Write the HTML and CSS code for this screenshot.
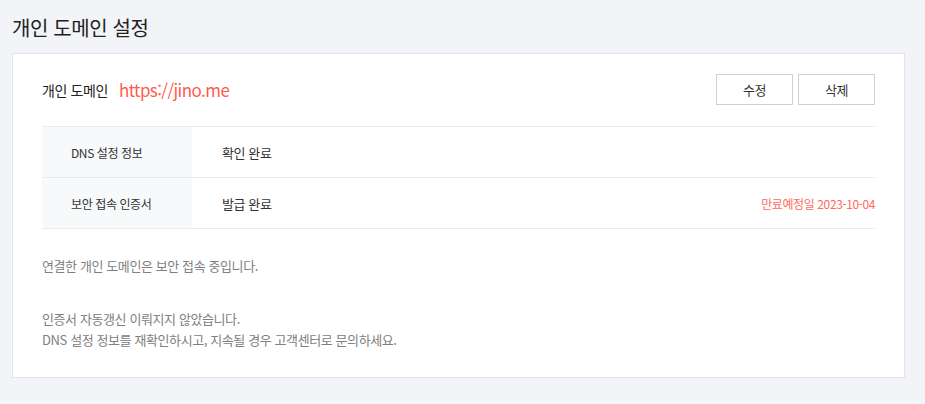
FILE: index.html
```html
<!DOCTYPE html>
<html lang="ko">
<head>
<meta charset="utf-8">
<link rel="stylesheet" href="styles.css">
</head>
<body>
<div class="page">
  <h1 class="title">개인 도메인 설정</h1>
  <div class="card">
    <div class="head">
      <div class="domain">
        <span class="domain-label">개인 도메인</span>
        <span class="domain-url">https://jino.me</span>
      </div>
      <div class="actions">
        <button class="btn">수정</button>
        <button class="btn">삭제</button>
      </div>
    </div>
    <div class="table">
      <div class="row">
        <div class="th">DNS 설정 정보</div>
        <div class="td">확인 완료</div>
      </div>
      <div class="row">
        <div class="th">보안 접속 인증서</div>
        <div class="td">발급 완료</div>
        <div class="expire">만료예정일 2023-10-04</div>
      </div>
    </div>
    <p class="note">연결한 개인 도메인은 보안 접속 중입니다.</p>
    <p class="note second">인증서 자동갱신 이뤄지지 않았습니다.<br>DNS 설정 정보를 재확인하시고, 지속될 경우 고객센터로 문의하세요.</p>
  </div>
</div>
</body>
</html>
```
FILE: styles.css
```css
html, body {
  margin: 0;
  padding: 0;
  background: #f3f4f7;
  font-family: "Noto Sans CJK KR", "Noto Sans", sans-serif;
  color: #222;
  letter-spacing: -0.025em;
}
.page {
  padding: 13px 20px 0 12px;
}
.title {
  margin: 0 0 10px;
  font-size: 20px;
  line-height: 30px;
  font-weight: 400;
  color: #222;
}
.card {
  background: #fff;
  border: 1px solid #e1e4ea;
  padding: 20px 29px 27px 29px;
}
.head {
  display: flex;
  justify-content: space-between;
  align-items: center;
  height: 31px;
  margin-bottom: 21px;
}
.domain {
  display: flex;
  align-items: center;
  gap: 11px;
}
.domain-label {
  font-size: 14px;
  color: #222;
}
.domain-url {
  font-size: 17px;
  letter-spacing: -0.6px;
  color: #ff5b4c;
}
.actions {
  display: flex;
  gap: 5px;
}
.btn {
  width: 77px;
  height: 31px;
  background: #fff;
  border: 1px solid #ccd0d7;
  font-family: inherit;
  letter-spacing: inherit;
  font-size: 13px;
  color: #333;
  padding: 0;
}
.table {
  border-top: 1px solid #e8eaee;
}
.row {
  display: flex;
  align-items: center;
  height: 50px;
  border-bottom: 1px solid #e8eaee;
  font-size: 13px;
  color: #333;
}
.th {
  width: 121px;
  padding-left: 29px;
  height: 100%;
  display: flex;
  align-items: center;
  background: #f8f9fb;
  font-size: 12px;
}
.td {
  padding-left: 30px;
  flex: 1;
}
.expire {
  font-size: 12px;
  color: #ff6a5c;
}
.note {
  margin: 26px 0 0;
  font-size: 13px;
  line-height: 21px;
  color: #808080;
}
.note.second {
  margin-top: 32px;
}
```
